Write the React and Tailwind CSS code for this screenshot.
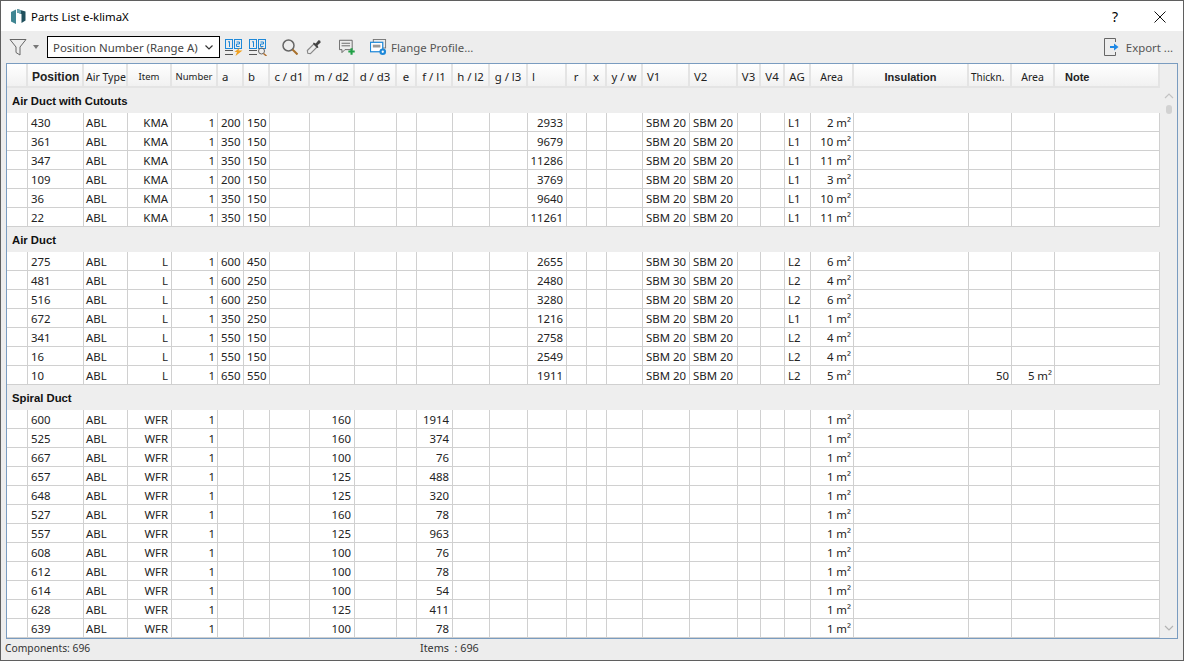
import React from 'react';

const WIDTHS = [21, 56, 44, 44, 46, 26, 26, 40, 45, 42, 20, 36, 37, 38, 39, 20, 20, 36, 47, 48, 23, 24, 26, 43, 115, 43, 43, 105];

const HEADERS = [
  ['', ''],
  ['Position', "font-bold text-[12px] font-['Liberation_Sans',sans-serif] text-left pl-[4px]"],
  ['Air Type', 'font-normal text-[10.5px] text-left pl-[2px]'],
  ['Item', 'font-normal text-[9.5px] text-center'],
  ['Number', 'font-normal text-[9.5px] text-center'],
  ['a', 'font-normal text-left pl-[4px]'],
  ['b', 'font-normal text-left pl-[4px]'],
  ['c / d1', 'font-normal text-center'],
  ['m / d2', 'font-normal text-center'],
  ['d / d3', 'font-normal text-center'],
  ['e', 'font-normal text-center'],
  ['f / l1', 'font-normal text-center'],
  ['h / l2', 'font-normal text-center'],
  ['g / l3', 'font-normal text-center'],
  ['l', 'font-normal text-left pl-[4px]'],
  ['r', 'font-normal text-center'],
  ['x', 'font-normal text-center'],
  ['y / w', 'font-normal text-center'],
  ['V1', 'font-normal text-left pl-[4px]'],
  ['V2', 'font-normal text-left pl-[4px]'],
  ['V3', 'font-normal text-center'],
  ['V4', 'font-normal text-center'],
  ['AG', 'font-normal text-center'],
  ['Area', 'font-normal text-[10.5px] text-center'],
  ['Insulation', "font-bold text-[11px] font-['Liberation_Sans',sans-serif] text-center"],
  ['Thickn.', 'font-normal text-[10px] text-left pl-[2px]'],
  ['Area', 'font-normal text-[10.5px] text-center'],
  ['Note', "font-bold text-[11px] font-['Liberation_Sans',sans-serif] text-left pl-[10px]"],
];

const kma = (pos, a, b, l, area) => ({ pos, item: 'KMA', a, b, l, v1: 'SBM 20', v2: 'SBM 20', ag: 'L1', area });

const GROUPS = [
  {
    title: 'Air Duct with Cutouts',
    rows: [
      kma('430', '200', '150', '2933', 2),
      kma('361', '350', '150', '9679', 10),
      kma('347', '350', '150', '11286', 11),
      kma('109', '200', '150', '3769', 3),
      kma('36', '350', '150', '9640', 10),
      kma('22', '350', '150', '11261', 11),
    ],
  },
  {
    title: 'Air Duct',
    rows: [
      { pos: '275', item: 'L', a: '600', b: '450', l: '2655', v1: 'SBM 30', v2: 'SBM 20', ag: 'L2', area: 6 },
      { pos: '481', item: 'L', a: '600', b: '250', l: '2480', v1: 'SBM 30', v2: 'SBM 20', ag: 'L2', area: 4 },
      { pos: '516', item: 'L', a: '600', b: '250', l: '3280', v1: 'SBM 20', v2: 'SBM 20', ag: 'L2', area: 6 },
      { pos: '672', item: 'L', a: '350', b: '250', l: '1216', v1: 'SBM 20', v2: 'SBM 20', ag: 'L1', area: 1 },
      { pos: '341', item: 'L', a: '550', b: '150', l: '2758', v1: 'SBM 20', v2: 'SBM 20', ag: 'L2', area: 4 },
      { pos: '16', item: 'L', a: '550', b: '150', l: '2549', v1: 'SBM 20', v2: 'SBM 20', ag: 'L2', area: 4 },
      { pos: '10', item: 'L', a: '650', b: '550', l: '1911', v1: 'SBM 20', v2: 'SBM 20', ag: 'L2', area: 5, thick: '50', area2: 5 },
    ],
  },
  {
    title: 'Spiral Duct',
    rows: [
      ['600', '160', '1914'],
      ['525', '160', '374'],
      ['667', '100', '76'],
      ['657', '125', '488'],
      ['648', '125', '320'],
      ['527', '160', '78'],
      ['557', '125', '963'],
      ['608', '100', '76'],
      ['612', '100', '78'],
      ['614', '100', '54'],
      ['628', '125', '411'],
      ['639', '100', '78'],
    ].map(([pos, d2, l1]) => ({ pos, item: 'WFR', d2, l1, area: 1 })),
  },
];

const Row = ({ row }) => {
  const cells = [
    ['', ''],
    [row.pos, 'pl-[3px]'],
    ['ABL', 'pl-[2px]'],
    [row.item, 'text-right pr-[3px]'],
    ['1', 'text-right pr-[2px]'],
    [row.a, 'pl-[3px]'],
    [row.b, 'pl-[3px]'],
    ['', ''],
    [row.d2, 'text-right pr-[3px]'],
    ['', ''],
    ['', ''],
    [row.l1, 'text-right pr-[3px]'],
    ['', ''],
    ['', ''],
    [row.l, 'text-right pr-[3px]'],
    ['', ''],
    ['', ''],
    ['', ''],
    [row.v1, 'pl-[3px]'],
    [row.v2, 'pl-[3px]'],
    ['', ''],
    ['', ''],
    [row.ag, 'pl-[3px]'],
    [row.area ? `${row.area} m²` : '', 'text-right pr-[2px]'],
    ['', ''],
    [row.thick, 'text-right pr-[2px]'],
    [row.area2 ? `${row.area2} m²` : '', 'text-right pr-[2px]'],
    ['', ''],
  ];
  return (
    <tr className="h-[19px]">
      {cells.map(([text, cls], i) => (
        <td key={i} className={`bg-white border-r border-b border-[#d0d0d0] p-0 pt-[2px] whitespace-nowrap overflow-hidden leading-[12px] ${cls}`}>
          {text}
        </td>
      ))}
    </tr>
  );
};

const Logo = () => (
  <svg width="15" height="15" viewBox="0 0 15 15" className="shrink-0">
    <path d="M0 3 L5 0.5 V15 L0 12.5 Z" fill="#3f8592" />
    <path d="M6 0 L14.5 2.5 V11.5 L10.5 14 V5 L6 3.5 Z" fill="#1f4f5c" />
    <path d="M6 0 L10 1.2 V4.8 L6 3.5 Z" fill="#6ba5b0" />
  </svg>
);

const ColumnsIcon = ({ flash }) => (
  <svg width="18" height="17" viewBox="0 0 18 17" className="shrink-0">
    <rect x="0.5" y="0.5" width="7" height="9" fill="none" stroke="#1e88d8" />
    <rect x="9.5" y="0.5" width="7" height="9" fill="none" stroke="#1e88d8" />
    <path d="M3 3 L4.5 2.5 V8 M11.5 3 H14.5 V5 H11.5 V7.5 H14.5" fill="none" stroke="#1e88d8" />
    <path d="M0 11.5 H8 M0 15.5 H8" stroke="#555" />
    {flash ? (
      <path d="M15 8.5 L9.5 13 H12 L10.5 17 L17.5 11.5 H13.5 Z" fill="#f0a020" />
    ) : (
      <g fill="none">
        <circle cx="12.5" cy="12" r="3" stroke="#666" />
        <path d="M14.5 14.5 L17.5 17" stroke="#b07030" strokeWidth="1.5" />
      </g>
    )}
  </svg>
);

const Toolbar = () => (
  <div className="h-[32px] flex items-center bg-[#ededed] shrink-0 text-[#444]">
    <svg width="18" height="20" viewBox="0 0 18 20" className="ml-[8px] shrink-0">
      <path d="M1 2.5 H17 L11 10 V18 L7 15.5 V10 Z" fill="none" stroke="#666" />
    </svg>
    <svg width="6" height="4" viewBox="0 0 6 4" className="ml-[6px] shrink-0">
      <path d="M0 0 H6 L3 4 Z" fill="#777" />
    </svg>
    <div className="ml-[8px] w-[173px] h-[22px] border border-black bg-white flex items-center pl-[5px] pr-[6px] justify-between whitespace-nowrap">
      <span className="pt-[1px]">Position Number (Range A)</span>
      <svg width="8" height="5" viewBox="0 0 8 5" className="shrink-0">
        <path d="M0.5 0.5 L4 4 L7.5 0.5" fill="none" stroke="#333" strokeWidth="1.2" />
      </svg>
    </div>
    <div className="ml-[5px]"><ColumnsIcon flash /></div>
    <div className="ml-[6px]"><ColumnsIcon /></div>
    <svg width="16" height="16" viewBox="0 0 16 16" className="ml-[15px] shrink-0">
      <circle cx="6.5" cy="6.5" r="5.5" fill="none" stroke="#666" strokeWidth="1.5" />
      <path d="M10.5 10.5 L15.5 15.5" stroke="#a8702c" strokeWidth="2" />
    </svg>
    <svg width="16" height="16" viewBox="0 0 18 18" className="ml-[8px] shrink-0">
      <path d="M2 16 L1.5 13 L9 5.5 L12.5 9 L5 16.5 Z" fill="none" stroke="#888" strokeWidth="1.3" />
      <path d="M8.5 4 L11 5 L14 1.5 Q16.5 1 16.5 4 L13 7 L14 9.5 L12.5 10 L8 5.5 Z" fill="#444" />
    </svg>
    <svg width="17" height="17" viewBox="0 0 20 20" className="ml-[17px] shrink-0">
      <path d="M0.5 1.5 H15.5 V12.5 H7 L3.5 16 V12.5 H0.5 Z" fill="none" stroke="#555" />
      <path d="M3 5 H13 M3 8 H13" stroke="#555" />
      <path d="M13.5 11 H16 V13.5 H18.5 V16 H16 V18.5 H13.5 V16 H11 V13.5 H13.5 Z" fill="#1fa045" />
    </svg>
    <svg width="17" height="17" viewBox="0 0 18 18" className="ml-[14px] shrink-0">
      <rect x="3.5" y="0.5" width="13" height="9" fill="none" stroke="#777" />
      <rect x="0.5" y="3.5" width="13" height="10" fill="#fff" stroke="#1e88d8" strokeWidth="1.3" />
      <rect x="3" y="6" width="8" height="3" fill="#999" />
      <circle cx="13.5" cy="13.5" r="3.5" fill="#1e88d8" />
      <circle cx="13.5" cy="13.5" r="1.2" fill="#fff" />
    </svg>
    <span className="ml-[4px] pt-[1px] text-[#555]">Flange Profile...</span>
    <div className="ml-auto mr-[10px] flex items-center gap-[6px]">
      <svg width="16" height="18" viewBox="0 0 16 18" className="shrink-0">
        <path d="M11.5 4 V0.5 H0.5 V17.5 H11.5 V14" fill="none" stroke="#666" />
        <path d="M6 8 H10 V5.5 L14.5 9 L10 12.5 V10 H6 Z" fill="#1e88e5" />
      </svg>
      <span className="pt-[1px] text-[#555]">Export ...</span>
    </div>
  </div>
);

const Scrollbar = () => (
  <div className="w-[17px] shrink-0 bg-[#eeeeee] flex flex-col items-center">
    <div className="h-[29px] shrink-0" />
    <svg width="10" height="6" viewBox="0 0 10 6" className="shrink-0">
      <path d="M1 5 L5 1 L9 5" fill="none" stroke="#c4c4c4" strokeWidth="1.2" />
    </svg>
    <div className="mt-[6px] w-[6px] h-[9px] rounded-[3px] bg-[#d2d2d2] shrink-0" />
    <div className="flex-1" />
    <svg width="10" height="6" viewBox="0 0 10 6" className="mb-[7px] shrink-0">
      <path d="M1 1 L5 5 L9 1" fill="none" stroke="#b4b4b4" strokeWidth="1.2" />
    </svg>
  </div>
);

const App = () => {
  return (
    <div className="w-[1184px] h-[661px] flex flex-col overflow-hidden border border-[#5f5f5f] bg-[#ededed] font-['Noto_Sans',sans-serif] text-[11.4px] text-[#222]">
      {/* Titelbalk */}
      <div className="h-[30px] bg-white flex items-center pl-[10px] pt-[1px] shrink-0">
        <Logo />
        <span className="ml-[5px] text-black">Parts List e-klimaX</span>
        <span className="ml-auto text-[14px] text-black">?</span>
        <svg width="12" height="12" viewBox="0 0 12 12" className="ml-[36px] mr-[17px]">
          <path d="M0.5 0.5 L11.5 11.5 M11.5 0.5 L0.5 11.5" stroke="#111" />
        </svg>
      </div>

      <Toolbar />

      {/* Tabel */}
      <div className="mx-[5px] h-[576px] border border-[#7a9cc0] bg-[#eeeeee] flex shrink-0 overflow-hidden">
        <div className="w-[1153px] shrink-0 overflow-hidden">
          <table className="table-fixed border-separate border-spacing-0 w-[1153px]">
            <colgroup>
              {WIDTHS.map((w, i) => (
                <col key={i} style={{ width: w }} />
              ))}
            </colgroup>
            <thead>
              <tr className="h-[24px]">
                {HEADERS.map(([label, cls], i) => (
                  <th
                    key={i}
                    className={`p-0 pt-[3px] leading-[12px] whitespace-nowrap overflow-hidden bg-gradient-to-b from-white to-[#f1f1f1] border-r-2 border-b-2 border-[#e4e4e4] ${cls}`}
                  >
                    {label}
                  </th>
                ))}
              </tr>
            </thead>
            <tbody>
              {GROUPS.map((group) => (
                <React.Fragment key={group.title}>
                  <tr className="h-[25px]">
                    <td colSpan={28} className="p-0 pl-[5px] pt-[1px] leading-[12px] bg-[#eeeeee] font-bold text-[11.3px] font-['Liberation_Sans',sans-serif] text-[#111]">
                      {group.title}
                    </td>
                  </tr>
                  {group.rows.map((row) => (
                    <Row key={row.pos} row={row} />
                  ))}
                </React.Fragment>
              ))}
            </tbody>
          </table>
        </div>
        <Scrollbar />
      </div>

      {/* Statusbalk */}
      <div className="flex-1 flex items-center text-[#333] pl-[4px] pb-[2px]">
        <span className="w-[415px] text-[10.3px]">Components: 696</span>
        <span className="text-[10.8px]">Items&nbsp;&nbsp;: 696</span>
      </div>
    </div>
  );
};

export default App;
